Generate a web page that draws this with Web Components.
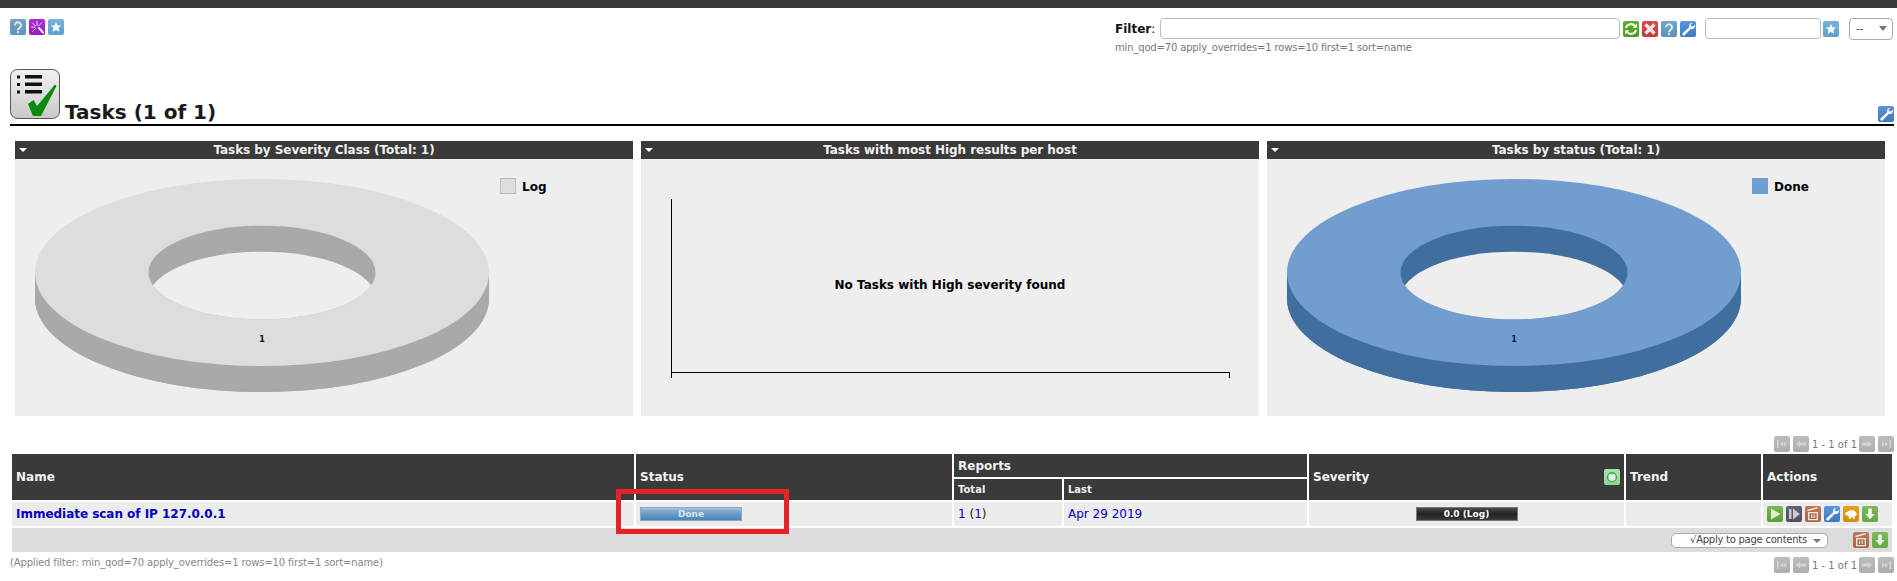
<!DOCTYPE html>
<html lang="en"><head><meta charset="utf-8"><title>Tasks</title>
<style>
html,body{margin:0;padding:0;background:#fff;font-family:"DejaVu Sans",sans-serif;font-size:12px;color:#111;}
</style></head>
<body>
<gsa-page></gsa-page>
<script>
const ICONS={
 help:['#6fa5c6,#5f93b8',`<path d="M5 6.2a3 3 0 1 1 4.7 2.5C8.6 9.5 8 10 8 11.2" fill="none" stroke="#dfe9f0" stroke-width="2"/><rect x="7" y="12.2" width="2" height="2" fill="#dfe9f0"/>`],
 wizard:['#b02ad8,#9a1cc4',`<path d="M8 2v5M3 3.5l3.5 3.5M13 3.5L9.5 7M2 8h4.5M3.5 12.5L6.5 9.5" stroke="#f3d8fb" stroke-width="1" fill="none"/><path d="M9.500 8.500l5 5.500" stroke="#fff" stroke-width="2"/>`],
 star:['#74b3da,#5fa0cc',`<path d="M8 2.8l1.6 3.4 3.7.4-2.8 2.5.8 3.7L8 10.9l-3.3 1.9.8-3.7-2.8-2.5 3.7-.4z" fill="#f2f7fb"/>`],
 refresh:['#5fb02c,#4a9a20',`<path d="M3 7a5 4.500 0 0 1 8.600-2.400M13 9a5 4.500 0 0 1-8.600 2.400" fill="none" stroke="#fff" stroke-width="2"/><path d="M13.800 2.500v4.200H9.600zM2.200 13.500V9.300h4.200z" fill="#fff"/>`],
 del:['#d84a4a,#c23a3a',`<path d="M3.500 3.500l9 9M12.500 3.500l-9 9" stroke="#f6e9e9" stroke-width="3.200"/>`],
 wrench:['#5a96dc,#3c78bc',`<path d="M12.800 1.800a3.400 3.400 0 0 0-3.600 4.400L2.600 12.200a1.500 1.500 0 0 0 2.100 2.100l6.100-6.500a3.400 3.400 0 0 0 4.300-4.100l-2 1.900-2-.5-.5-1.900z" fill="#fff"/>`],
 play:['#78b84e,#5e9e3a',`<path d="M4 2.500L13.500 8 4 13.500z" fill="#dff0d0"/>`],
 resume:['#62626e,#50505c',`<rect x="3" y="3" width="2.500" height="10" fill="#c8c8d0"/><path d="M7 2.500L14 8l-7 5.500z" fill="#c8c8d0"/>`],
 trash:['#bd7a58,#a96646',`<path d="M2.500 4.500L12.500 1.800" stroke="#f2e6de" stroke-width="1.500"/><path d="M3.700 6.700h8.600v7H3.700z" fill="none" stroke="#f2e6de" stroke-width="1.300"/><path d="M6.700 8.500v3.500M9.300 8.500v3.500" stroke="#f2e6de" stroke-width="1.100"/>`],
 pig:['#e4a21f,#d2900f',`<ellipse cx="8.600" cy="7.800" rx="5" ry="3.600" fill="#fff"/><path d="M2.500 6.200h2.500v3H2.500zM6 10.500h1.500v2.500H6zM10 10.500h1.500v2.500H10z" fill="#fff"/>`],
 down:['#78bc58,#62a844',`<path d="M6.200 2.500h3.600v5.500h2.700L8 13.500 3.500 8h2.700z" fill="#eef7e8"/>`],
 first:['#bcbcbc,#aeaeae',`<rect x="3" y="4" width="1.600" height="8" fill="#d4d4d4"/><path d="M6 8l3-3v6zM9 8l3-3v6z" fill="#d4d4d4"/>`],
 prev:['#bcbcbc,#aeaeae',`<path d="M3 8l4-3.500v2h6v3H7v2z" fill="#d4d4d4"/>`],
 next:['#bcbcbc,#aeaeae',`<path d="M13 8L9 4.500v2H3v3h6v2z" fill="#d4d4d4"/>`],
 last:['#bcbcbc,#aeaeae',`<rect x="11.400" y="4" width="1.600" height="8" fill="#d4d4d4"/><path d="M10 8L7 5v6zM7 8L4 5v6z" fill="#d4d4d4"/>`],
 overrides:['#a6e4ac,#8cd496',`<circle cx="8" cy="8.200" r="4.400" fill="#dff5e2" stroke="#3fa85a" stroke-width="1.400"/><path d="M8 3v2.500" stroke="#3fa85a" stroke-width="1.300"/>`]
};
class GsaIcon extends HTMLElement{
 constructor(){super();this.attachShadow({mode:'open'});}
 connectedCallback(){
  const [bg,svg]=ICONS[this.getAttribute('name')];
  this.shadowRoot.innerHTML=`<style>:host{display:block;flex:none;width:16px;height:16px;border-radius:2px;background:linear-gradient(${bg});}svg{display:block}</style><svg width="16" height="16" viewBox="0 0 16 16">${svg}</svg>`;
 }
}
class GsaTopbar extends HTMLElement{
 constructor(){super();this.attachShadow({mode:'open'}).innerHTML=`<style>
 :host{display:block;height:61px;border-top:8px solid #3a3a3a;font-family:"DejaVu Sans",sans-serif}
 .row{display:flex;justify-content:space-between;height:61px}
 .left{display:flex;gap:3px;padding:11px 0 0 10px;align-items:flex-start}
 .right{display:grid;grid-template-columns:45px 460px 85px 116px 28px 44px;grid-template-rows:21px 13px;align-content:start;margin:10px 4px 0 0;align-items:center}
 .lbl{font-size:12px;color:#111}.lbl b{font-weight:700}
 .inp{height:19px;border:1px solid #bbb;border-radius:4px;background:#fff}
 .tools{display:flex;gap:3px;padding-left:3px}
 .starc{padding-left:2px}
 .sel{height:20px;border:1px solid #aaa;border-radius:4px;background:#fff;display:flex;justify-content:space-between;align-items:center;padding:0 5px 0 6px;font-size:10px;color:#333}
 .sel i{width:0;height:0;border:4px solid transparent;border-top:5px solid #777;border-bottom:0}
 .sub{grid-column:1/-1;font-size:10px;color:#777;padding-top:3px;line-height:13px;white-space:nowrap;letter-spacing:-.16px}
 </style><div class="row"><div class="left"><gsa-icon name="help"></gsa-icon><gsa-icon name="wizard"></gsa-icon><gsa-icon name="star"></gsa-icon></div>
 <div class="right"><div class="lbl"><b>Filter</b>:</div><div class="inp"></div><div class="tools"><gsa-icon name="refresh"></gsa-icon><gsa-icon name="del"></gsa-icon><gsa-icon name="help"></gsa-icon><gsa-icon name="wrench"></gsa-icon></div><div class="inp"></div><div class="starc"><gsa-icon name="star"></gsa-icon></div><div class="sel"><span>--</span><i></i></div><div class="sub">min_qod=70 apply_overrides=1 rows=10 first=1 sort=name</div></div></div>`;}
}
class GsaHeading extends HTMLElement{
 constructor(){super();this.attachShadow({mode:'open'}).innerHTML=`<style>
 :host{display:flex;align-items:flex-end;height:55px;margin:0 3px 0 10px;border-bottom:2px solid #000;font-family:"DejaVu Sans",sans-serif}
 svg{display:block;margin-bottom:5px;flex:none}
 h1{margin:0 0 0 5px;font-size:20px;line-height:24px;font-weight:700;color:#1a1a1a;flex:1}
 gsa-icon{margin-bottom:2px}
 </style><svg width="50" height="50" viewBox="0 0 50 50"><defs><linearGradient id="g" x1="0" y1="0" x2="0" y2="1"><stop offset="0" stop-color="#f2f2f2"/><stop offset="1" stop-color="#c8c8c8"/></linearGradient></defs><rect x=".5" y=".5" width="49" height="49" rx="7" fill="url(#g)" stroke="#555"/><path d="M7 6.500h3v3H7zM7 14h3v3H7zM7 21.500h3v3H7zM15 6h17v3.400H15zM15 13.600h17v3.400H15zM15 21h17v3.400H15z" fill="#111"/><path d="M18 35L23.500 31L27 37L45 15.500L46.500 17L31 47H23Z" fill="#0a8a0a"/></svg><h1>Tasks (1 of 1)</h1><gsa-icon name="wrench"></gsa-icon>`;}
}
class GsaPanel extends HTMLElement{
 constructor(){super();this.attachShadow({mode:'open'}).innerHTML=`<style>
 :host{display:block;width:618px;height:275px;background:#eee;font-family:"DejaVu Sans",sans-serif}
 header{height:18px;background:#3a3a3a;color:#f0f0f0;font-size:12px;font-weight:700;line-height:18px;text-align:center;position:relative;letter-spacing:-.05px}
 header i{position:absolute;left:4px;top:7px;width:0;height:0;border:4px solid transparent;border-top:4px solid #fff;border-bottom:0}
 </style><header><i></i><span></span></header><slot></slot>`;}
 connectedCallback(){this.shadowRoot.querySelector('span').textContent=this.getAttribute('title');this.removeAttribute('title');}
}
class GsaDonut extends HTMLElement{
 constructor(){super();this.attachShadow({mode:'open'});}
 connectedCallback(){
  const g=n=>this.getAttribute(n);
  const cx=+g('cx'),cy=113.5,rx=227,ry=93.5,d=26,hx=113.5,hy=46.8;
  const top=g('top'),side=g('side'),ink=g('ink'),lx=+g('lx');
  const stroke=g('lstroke');
  this.shadowRoot.innerHTML=`<style>:host{display:block;height:257px}svg{display:block}text{font-family:"DejaVu Sans",sans-serif;font-weight:700}</style>
  <svg width="618" height="257" viewBox="0 0 618 257"><defs><clipPath id="h"><ellipse cx="${cx}" cy="${cy}" rx="${hx}" ry="${hy}"/></clipPath></defs>
  <path d="M${cx-rx} ${cy}V${cy+d}A${rx} ${ry} 0 0 0 ${cx+rx} ${cy+d}V${cy}Z" fill="${side}"/><ellipse cx="${cx}" cy="${cy+d}" rx="${rx}" ry="${ry}" fill="${side}"/>
  <ellipse cx="${cx}" cy="${cy}" rx="${rx}" ry="${ry}" fill="${top}"/>
  <ellipse cx="${cx}" cy="${cy}" rx="${hx}" ry="${hy}" fill="${side}"/>
  <ellipse cx="${cx}" cy="${cy+d}" rx="${hx}" ry="${hy}" fill="#eee" clip-path="url(#h)"/>
  <text x="${cx}" y="182.500" font-size="8" text-anchor="middle" fill="${ink}">1</text>
  <rect x="${lx+.5}" y="19.500" width="15" height="15" fill="${top}" stroke="${stroke}"/>
  <text x="${lx+22}" y="32" font-size="12" fill="#000">${g('label')}</text></svg>`;
 }
}
class GsaEmptyChart extends HTMLElement{
 constructor(){super();this.attachShadow({mode:'open'}).innerHTML=`<style>:host{display:block;height:257px}svg{display:block}text{font-family:"DejaVu Sans",sans-serif;font-weight:700}</style>
 <svg width="618" height="257" viewBox="0 0 618 257"><path d="M30.500 40V219M30.500 213.500H588.500V219" fill="none" stroke="#000"/><text x="309" y="130" font-size="12" text-anchor="middle" fill="#000">No Tasks with High severity found</text></svg>`;}
}
class GsaPager extends HTMLElement{
 constructor(){super();this.attachShadow({mode:'open'}).innerHTML=`<style>:host{display:flex;gap:3px;align-items:center;font:10px "DejaVu Sans",sans-serif;color:#777;height:16px}span{width:44px;text-align:center;white-space:nowrap}</style>
 <gsa-icon name="first"></gsa-icon><gsa-icon name="prev"></gsa-icon><span>1 - 1 of 1</span><gsa-icon name="next"></gsa-icon><gsa-icon name="last"></gsa-icon>`;}
}
class GsaBar extends HTMLElement{
 constructor(){super();this.attachShadow({mode:'open'}).innerHTML=`<style>
 :host{display:block;width:102px;height:14px;box-sizing:border-box;border:1px solid var(--edge);background:var(--fill);color:var(--ink,#fff);font:700 9px/12px "DejaVu Sans",sans-serif;text-align:center}
 </style><slot></slot>`;}
}
class GsaTaskTable extends HTMLElement{
 constructor(){super();this.attachShadow({mode:'open'}).innerHTML=`<style>
 :host{display:block;margin-left:10px;width:1884px;font-family:"DejaVu Sans",sans-serif;position:relative}
 table{table-layout:fixed;width:1884px;border-collapse:separate;border-spacing:2px;font-size:12px}
 th{background:#3a3a3a;color:#f2f2f2;font-weight:700;text-align:left;padding:0 4px;font-size:12px;white-space:nowrap}
 th.sm{font-size:10px}
 tr.h1 th{height:23px}tr.h2 th{height:21px}
 td{background:#ececec;height:24px;padding:0 4px;white-space:nowrap;color:#222}
 a{color:#0000c0;text-decoration:none}
 a.n{font-weight:700;letter-spacing:-.03px}
 .sev{display:flex;align-items:center;justify-content:space-between}
 .acts{display:flex;gap:3px}
 .c{display:flex;justify-content:center}
 td.foot{background:#dcdcdc;padding:0 4px 0 0}
 .fr{display:flex;align-items:center;justify-content:flex-end}
 .sel{width:157px;height:15px;box-sizing:border-box;border:1px solid #aaa;border-radius:5px;background:#fff;font-size:10px;line-height:12px;letter-spacing:-.25px;color:#444;padding-left:18px;position:relative;margin-right:25px}
 .sel i{position:absolute;right:6px;top:5px;width:0;height:0;border:4px solid transparent;border-top:4px solid #777;border-bottom:0}
 .fr gsa-icon+gsa-icon{margin-left:3px}
 .mark{position:absolute;left:606px;top:37px;width:173px;height:45px;box-sizing:border-box;border:5px solid #e8202a;pointer-events:none}
 </style>
 <table><colgroup><col style="width:622px"><col style="width:316px"><col style="width:108px"><col style="width:243px"><col style="width:315px"><col style="width:135px"><col style="width:129px"></colgroup>
 <thead><tr class="h1"><th rowspan="2">Name</th><th rowspan="2">Status</th><th colspan="2">Reports</th><th rowspan="2"><div class="sev"><span>Severity</span><gsa-icon name="overrides"></gsa-icon></div></th><th rowspan="2">Trend</th><th rowspan="2">Actions</th></tr>
 <tr class="h2"><th class="sm">Total</th><th class="sm">Last</th></tr></thead>
 <tbody><tr><td><a class="n">Immediate scan of IP 127.0.0.1</a></td>
 <td><gsa-bar style="--edge:#8aa9c4;--ink:#d4e6f6;--fill:linear-gradient(#a5c3de,#7ba6cc 30%,#5d92c0 70%,#4d84b4)">Done</gsa-bar></td>
 <td><a>1</a> (<a>1</a>)</td><td><a>Apr 29 2019</a></td>
 <td><div class="c"><gsa-bar style="--edge:#777;--fill:linear-gradient(#4a4a4a,#222 50%,#3a3a3a)">0.0 (Log)</gsa-bar></div></td><td></td>
 <td><div class="acts"><gsa-icon name="play"></gsa-icon><gsa-icon name="resume"></gsa-icon><gsa-icon name="trash"></gsa-icon><gsa-icon name="wrench"></gsa-icon><gsa-icon name="pig"></gsa-icon><gsa-icon name="down"></gsa-icon></div></td></tr>
 <tr><td class="foot" colspan="7"><div class="fr"><div class="sel">√Apply to page contents<i></i></div><gsa-icon name="trash"></gsa-icon><gsa-icon name="down"></gsa-icon></div></td></tr></tbody></table>
 <div class="mark"></div>`;}
}
class GsaPage extends HTMLElement{
 constructor(){super();this.attachShadow({mode:'open'}).innerHTML=`<style>
 :host{display:block;width:1897px;height:581px;overflow:hidden;font-family:"DejaVu Sans",sans-serif}
 .panels{display:flex;gap:8px;margin:15px 0 0 15px}
 .pg{display:flex;justify-content:flex-end;margin:20px 3px 0 0}
 .bottom{display:flex;justify-content:space-between;align-items:flex-start;margin:3px 3px 0 10px;font-size:10px;line-height:12px;color:#888}
 .bottom span{letter-spacing:-.15px}
 </style>
 <gsa-topbar></gsa-topbar><gsa-heading></gsa-heading>
 <div class="panels">
 <gsa-panel title="Tasks by Severity Class (Total: 1)"><gsa-donut cx="247" top="#dddddd" side="#a9a9a9" ink="#000" lx="485" lstroke="#bbb" label="Log"></gsa-donut></gsa-panel>
 <gsa-panel title="Tasks with most High results per host"><gsa-empty-chart></gsa-empty-chart></gsa-panel>
 <gsa-panel title="Tasks by status (Total: 1)"><gsa-donut cx="247" top="#729dcf" side="#406f9e" ink="#06204a" lx="485" lstroke="#729dcf" label="Done"></gsa-donut></gsa-panel>
 </div>
 <div class="pg"><gsa-pager></gsa-pager></div>
 <gsa-task-table></gsa-task-table>
 <div class="bottom"><span>(Applied filter: min_qod=70 apply_overrides=1 rows=10 first=1 sort=name)</span><gsa-pager></gsa-pager></div>`;}
}
customElements.define('gsa-icon',GsaIcon);
customElements.define('gsa-topbar',GsaTopbar);
customElements.define('gsa-heading',GsaHeading);
customElements.define('gsa-panel',GsaPanel);
customElements.define('gsa-donut',GsaDonut);
customElements.define('gsa-empty-chart',GsaEmptyChart);
customElements.define('gsa-pager',GsaPager);
customElements.define('gsa-bar',GsaBar);
customElements.define('gsa-task-table',GsaTaskTable);
customElements.define('gsa-page',GsaPage);
</script>
</body></html>
